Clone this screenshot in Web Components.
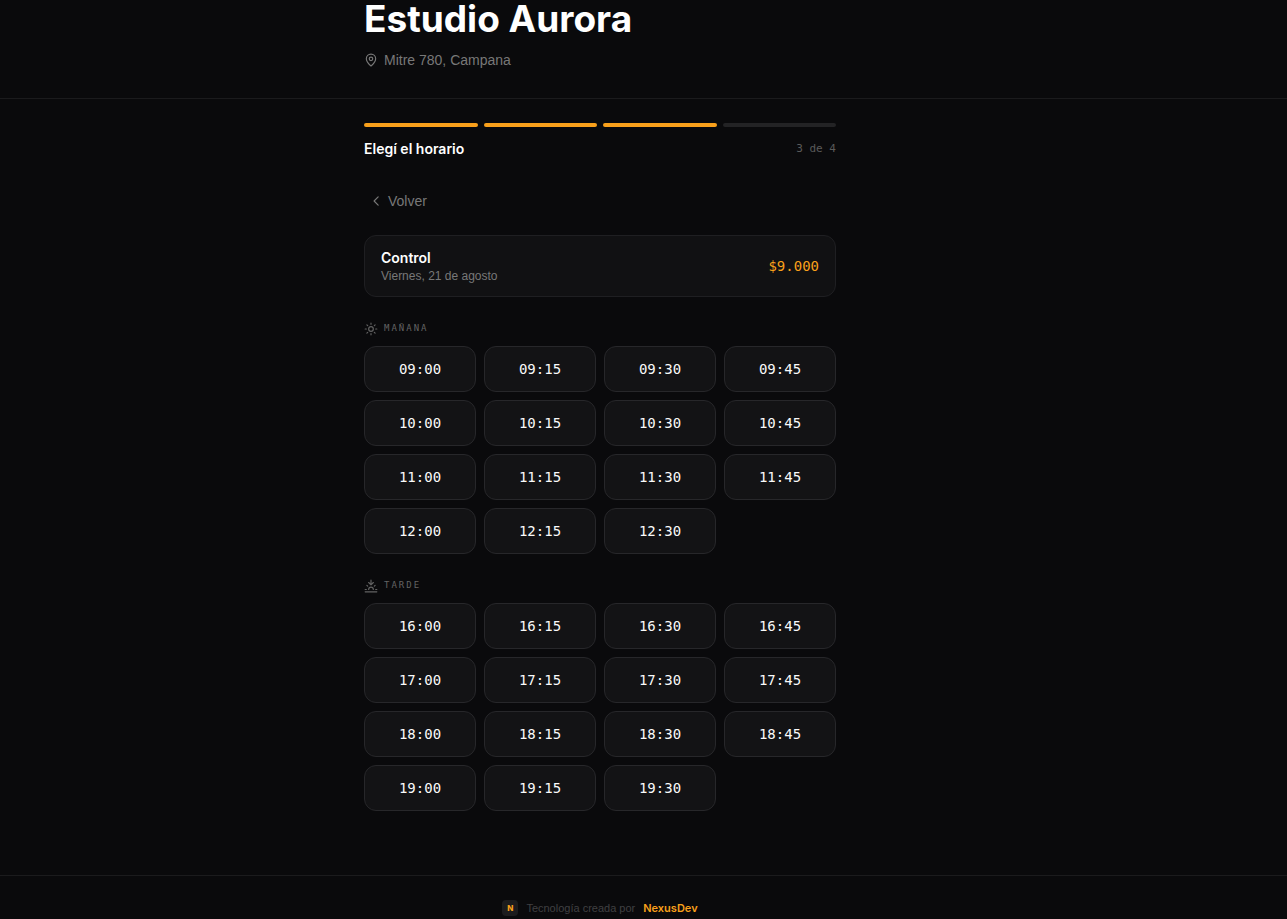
<!DOCTYPE html>
<html lang="es">
<head>
<meta charset="utf-8">
<meta name="viewport" content="width=device-width, initial-scale=1">
<title>Estudio Aurora</title>
<style>
  :root {
    --bg: #0a0a0c;
    --card: #111113;
    --slot: #131315;
    --line: #1b1b1d;
    --line-strong: #27272a;
    --text: #fafafa;
    --muted: #787878;
    --faint: #5a5a5a;
    --accent: #f9a01b;
    --display: Inter, "Liberation Sans", sans-serif;
    --mono: "DejaVu Sans Mono", "Liberation Mono", monospace;
    --page: 1200px;
    --column: 472px;
  }
  body {
    margin: 0;
    background: var(--bg);
    color: var(--text);
    font: 14px/20px "Liberation Sans", sans-serif;
  }
</style>
</head>
<body>
<booking-app></booking-app>
<script>
const ICONS = {
  pin: '<path d="M20 10c0 4.993-5.539 10.193-7.399 11.799a1 1 0 0 1-1.202 0C9.539 20.193 4 14.993 4 10a8 8 0 0 1 16 0"/><circle cx="12" cy="10" r="3"/>',
  back: '<path d="m14 19-7-7 7-7"/>',
  sun: '<circle cx="12" cy="12" r="4"/><path d="M12 2v2M12 20v2M4.93 4.93l1.41 1.41M17.66 17.66l1.41 1.41M2 12h2M20 12h2M6.34 17.66l-1.41 1.41M19.07 4.93l-1.41 1.41"/>',
  sunset: '<path d="M12 10V2M4.93 10.93l1.41 1.41M2 18h2M20 18h2M19.07 10.93l-1.41 1.41M22 22H2M16 6l-4 4-4-4M16 18a4 4 0 0 0-8 0"/>'
};

class Component extends HTMLElement {
  connectedCallback() {
    if (this.shadowRoot) return;
    this.attachShadow({ mode: "open" }).innerHTML = this.render();
  }
}

customElements.define("app-icon", class extends Component {
  render() {
    return `<style>
      :host { display: block; flex: none; width: 14px; height: 14px; }
      svg { display: block; width: 100%; height: 100%; fill: none; stroke: currentColor;
            stroke-width: 2; stroke-linecap: round; stroke-linejoin: round; }
    </style><svg viewBox="0 0 24 24" aria-hidden="true">${ICONS[this.getAttribute("name")]}</svg>`;
  }
});

// Horizontal band with a centred reading column.
customElements.define("page-column", class extends Component {
  render() {
    return `<style>
      :host { display: block; max-width: var(--page); }
      div { max-width: var(--column); margin: 0 auto; }
    </style><div><slot></slot></div>`;
  }
});

customElements.define("studio-header", class extends Component {
  render() {
    return `<style>
      :host { display: block; border-bottom: 1px solid var(--line); padding-bottom: 28px; }
      h1 { margin: 0 0 12px; font: 700 37px/38px var(--display); color: #fff; }
      p { display: flex; align-items: center; gap: 6px; margin: 0; color: var(--muted); }
    </style>
    <page-column>
      <h1><slot></slot></h1>
      <p><app-icon name="pin"></app-icon><slot name="address"></slot></p>
    </page-column>`;
  }
});

customElements.define("step-progress", class extends Component {
  render() {
    const step = +this.getAttribute("step"), total = +this.getAttribute("total");
    const bars = Array.from({ length: total }, (_, i) => `<i class="${i < step ? "on" : ""}"></i>`).join("");
    return `<style>
      :host { display: block; }
      .bars { display: flex; gap: 6px; margin-bottom: 12px; }
      i { flex: 1; height: 4px; border-radius: 2px; background: #232325; }
      .on { background: var(--accent); }
      .row { display: flex; justify-content: space-between; align-items: center; }
      h2 { margin: 0; font: 600 14px/20px var(--display); color: #fff; }
      span { font: 11px/20px var(--mono); color: var(--faint); }
    </style>
    <div class="bars">${bars}</div>
    <div class="row"><h2><slot></slot></h2><span>${step} de ${total}</span></div>`;
  }
});

customElements.define("back-button", class extends Component {
  render() {
    return `<style>
      :host { display: flex; }
      button { display: flex; align-items: center; gap: 4px; padding: 8px 6px; border: 0;
               background: none; color: var(--muted); font: inherit; cursor: pointer; }
      button:hover { color: var(--text); }
    </style><button type="button"><app-icon name="back"></app-icon><slot></slot></button>`;
  }
});

customElements.define("service-summary", class extends Component {
  render() {
    return `<style>
      :host { display: flex; justify-content: space-between; align-items: center; padding: 12px 16px;
              border: 1px solid #1f1f22; border-radius: 12px; background: var(--card); }
      h3 { margin: 0; font: 600 14px/20px var(--display); color: #fff; }
      p { margin: 0; font-size: 12px; line-height: 16px; color: var(--muted); }
      strong { font: 14px/20px var(--mono); color: var(--accent); }
    </style>
    <div><h3><slot></slot></h3><p><slot name="date"></slot></p></div>
    <strong><slot name="price"></slot></strong>`;
  }
});

customElements.define("time-slot", class extends Component {
  render() {
    return `<style>
      :host { display: block; }
      button { display: block; width: 100%; height: 46px; padding: 0; border: 1px solid var(--line-strong);
               border-radius: 12px; background: var(--slot); color: var(--text);
               font: 14px/20px var(--mono); cursor: pointer; }
      button:hover { border-color: var(--accent); }
    </style><button type="button"><slot></slot></button>`;
  }
});

customElements.define("time-group", class extends Component {
  render() {
    const times = this.getAttribute("times").split(" ").map(t => `<time-slot>${t}</time-slot>`).join("");
    return `<style>
      :host { display: block; }
      h4 { display: flex; align-items: center; gap: 6px; margin: 0 0 10px; color: #636363;
           font: 9px/15px var(--mono); letter-spacing: 2px; text-transform: uppercase; }
      .grid { display: grid; grid-template-columns: repeat(4, minmax(0, 1fr)); gap: 8px; }
    </style>
    <h4><app-icon name="${this.getAttribute("icon")}"></app-icon><slot></slot></h4>
    <div class="grid">${times}</div>`;
  }
});

customElements.define("site-footer", class extends Component {
  render() {
    return `<style>
      :host { display: block; border-top: 1px solid var(--line); padding-top: 24px; }
      div { display: flex; justify-content: center; align-items: center; gap: 8px;
            font-size: 11px; line-height: 16px; color: #404042; }
      b { width: 16px; height: 16px; border-radius: 4px; background: #1c1c1e; color: var(--accent);
          font: 800 8px/16px var(--display); text-align: center; }
      a { color: var(--accent); font-family: var(--display); font-weight: 600; text-decoration: none; }
    </style>
    <page-column><div><b>N</b><span>Tecnología creada por</span><a href="#">NexusDev</a></div></page-column>`;
  }
});

customElements.define("booking-app", class extends Component {
  render() {
    return `<style>
      :host { display: block; }
      main { padding: 24px 0 64px; }
      back-button { margin: 24px 0 16px; }
      time-group { margin-top: 24px; }
    </style>
    <studio-header>Estudio Aurora<span slot="address">Mitre 780, Campana</span></studio-header>
    <main><page-column>
      <step-progress step="3" total="4">Elegí el horario</step-progress>
      <back-button>Volver</back-button>
      <service-summary>Control<span slot="date">Viernes, 21 de agosto</span><span slot="price">$9.000</span></service-summary>
      <time-group icon="sun" times="09:00 09:15 09:30 09:45 10:00 10:15 10:30 10:45 11:00 11:15 11:30 11:45 12:00 12:15 12:30">Mañana</time-group>
      <time-group icon="sunset" times="16:00 16:15 16:30 16:45 17:00 17:15 17:30 17:45 18:00 18:15 18:30 18:45 19:00 19:15 19:30">Tarde</time-group>
    </page-column></main>
    <site-footer></site-footer>`;
  }
});
</script>
</body>
</html>
